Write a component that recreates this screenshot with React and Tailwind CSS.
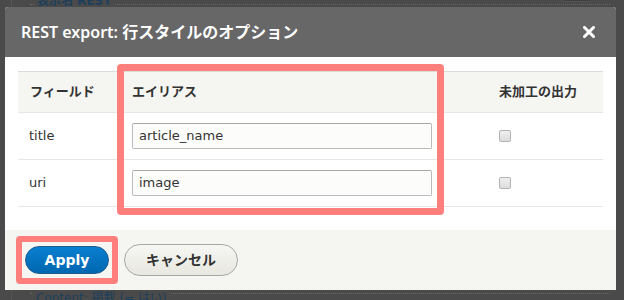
import React from 'react';

const font = { fontFamily: '"DejaVu Sans", "Noto Sans CJK JP", sans-serif' };
const titleFont = { fontFamily: '"Noto Sans", "Noto Sans CJK JP", sans-serif' };

const rows = [
    { field: 'title', alias: 'article_name' },
    { field: 'uri', alias: 'image' },
];

const Checkbox = () => (
    <span className="inline-block w-[12px] h-[12px] rounded-[2px] border border-[#b3b3b3] bg-gradient-to-b from-[#f0f0f0] to-[#dcdcdc]" />
);

export default function App() {
    return (
        <div className="relative w-[624px] h-[300px] overflow-hidden bg-[#4a4a4a]" style={font}>
            {/* page behind the overlay */}
            <div className="absolute left-[11px] top-0 bottom-0 border-l border-dotted border-[#5e5e5e]" />
            <div className="absolute left-[30px] right-[14px] top-[4px] border-t border-dotted border-[#666]" />
            <div className="absolute left-[34px] top-[-8px] px-[3px] bg-[#4a4a4a] text-[12px] text-[#1d3f5c] font-bold">表示名 REST</div>
            <div className="absolute left-[563px] top-[-6px] w-[28px] h-[8px] rounded-[2px] bg-[#3e3e3e] border border-[#555]" />
            <div className="absolute left-[30px] right-[14px] top-[293px] border-t border-dotted border-[#666]" />
            <div className="absolute left-[33px] top-[289px] px-[3px] bg-[#4a4a4a] text-[12px] text-[#1d3f5c]">Content: 掲載 (= はい)</div>

            {/* dialog */}
            <div className="absolute left-[5px] top-[7px] w-[611px] h-[283px] flex flex-col rounded-t-[3px] overflow-hidden bg-white">
                <div className="h-[50px] shrink-0 bg-[#676767] flex items-center justify-between pl-[16px] pr-[21px]">
                    <h1 className="text-white text-[16px] font-semibold" style={titleFont}>REST export: 行スタイルのオプション</h1>
                    <svg width="12" height="12" viewBox="0 0 12 12">
                        <path d="M1.5 1.5 L10.5 10.5 M10.5 1.5 L1.5 10.5" stroke="#fff" strokeWidth="3" strokeLinecap="square" />
                    </svg>
                </div>

                <div className="relative flex-1 px-[13px] pt-[14px]">
                    <table className="w-full border-collapse text-[13px] text-[#333]">
                        <thead>
                            <tr className="h-[41px] bg-[#f5f5f2] border-t border-[#dcdcd8]">
                                <th className="w-[101px] pl-[12px] text-left font-bold">フィールド</th>
                                <th className="w-[324px] pl-[13px] text-left font-bold">エイリアス</th>
                                <th className="pl-[56px] text-left font-bold">未加工の出力</th>
                            </tr>
                        </thead>
                        <tbody>
                            {rows.map((r) => (
                                <tr key={r.field} className="h-[47px] border-t border-[#e6e6e6] last:border-b">
                                    <td className="pl-[11px]">{r.field}</td>
                                    <td className="pl-[13px]">
                                        <div className="w-[300px] h-[26px] flex items-center px-[6px] bg-[#fcfcfa] border border-[#bbb] border-t-[#a8a8a8] rounded-[2px]">
                                            {r.alias}
                                        </div>
                                    </td>
                                    <td className="pl-[56px] pt-[4px]">
                                        <Checkbox />
                                    </td>
                                </tr>
                            ))}
                        </tbody>
                    </table>
                    <div className="absolute left-[112px] top-[7px] w-[327px] h-[151px] border-[7px] border-[#fe7f7c] rounded-[4px]" />
                </div>

                <div className="h-[60px] shrink-0 bg-[#f5f5f1] flex items-center pl-[11px] gap-[6px]">
                    <div className="border-[6px] border-[#fe7f7c] rounded-[4px] px-[3px] py-[4px] bg-[#f5f5f1]">
                        <button className="w-[84px] h-[28px] rounded-full bg-gradient-to-b from-[#0a7fd0] to-[#0067b0] border border-[#1e5c90] text-white text-[14px] font-bold">
                            Apply
                        </button>
                    </div>
                    <button className="w-[114px] h-[32px] rounded-full bg-gradient-to-b from-[#f6f6f3] to-[#e8e7e0] border border-[#a6a6a6] text-[#333] text-[14px] font-bold">
                        キャンセル
                    </button>
                </div>
            </div>
        </div>
    );
}
